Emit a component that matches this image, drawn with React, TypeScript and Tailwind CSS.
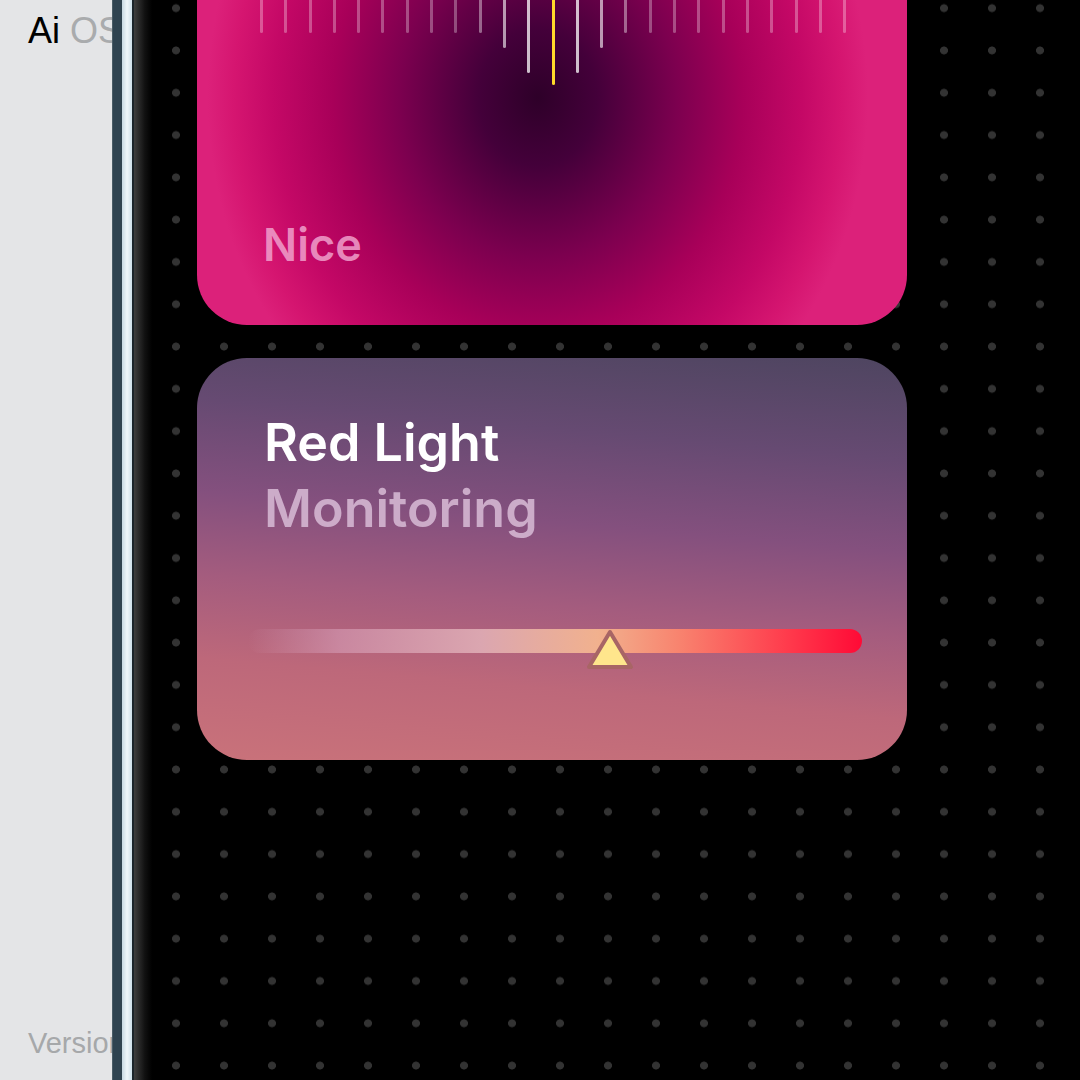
import React from 'react';

const ticks = Array.from({ length: 25 }, (_, i) => Math.abs(i - 12));

const tickClass = (d: number) => {
  if (d === 0) return 'h-[85px] bg-[#ffd92a]';
  if (d === 1) return 'h-[73px] bg-white/75';
  if (d === 2) return 'h-[48px] bg-white/60';
  if (d === 3) return 'h-[33px] bg-white/40';
  return 'h-[33px] bg-white/30';
};

const App = () => {
  return (
    <div className="flex h-[1080px] w-[1080px] overflow-hidden bg-black font-['Inter',sans-serif]">
      {/* side panel */}
      <div className="flex w-[112px] shrink-0 flex-col justify-between overflow-hidden whitespace-nowrap bg-[#e4e5e7] pl-[28px] pt-[13px] pb-[22px] font-['Liberation_Sans',Arial,sans-serif]">
        <div className="text-[36px] leading-[36px]">
          <span className="text-black">Ai</span> <span className="text-[#a9abad]">OS</span>
        </div>
        <div className="text-[29px] leading-[29px] text-[#a6a8aa]">Version 1.0</div>
      </div>
      <div className="w-[10px] shrink-0 border-l border-[#4a5c66] bg-[#2f4350]" />
      <div className="w-[10px] shrink-0 bg-[linear-gradient(to_right,#c6d8e2,#eef6fa,#cfe0ea)]" />
      <div className="w-[2px] shrink-0 bg-[#1b252b]" />
      <div className="w-[18px] shrink-0 bg-[linear-gradient(to_right,#3e3e3e,#111_60%,#000)]" />

      {/* canvas */}
      <div className="flex flex-1 flex-col gap-[33px] bg-[radial-gradient(circle,#333_3.6px,transparent_4.3px)] bg-[length:48px_42.3px] bg-[position:0px_-13px] pl-[45px] pr-[173px]">
        <div className="flex h-[325px] flex-col justify-between rounded-b-[50px] bg-[radial-gradient(ellipse_330px_380px_at_48%_30%,#2e0029_0%,#44003a_18%,#7c004f_42%,#a80059_62%,#c40866_80%,#d51570_92%,#dc217a_100%)] pb-[58px] pl-[63px]">
          <div className="flex items-start gap-[21.3px]">
            {ticks.map((d, i) => (
              <div key={i} className={`w-[3px] rounded-b-full ${tickClass(d)}`} />
            ))}
          </div>
          <div className="pl-[3px] text-[45px] font-semibold leading-none text-[#f0a0cc]/85">Nice</div>
        </div>

        <div className="flex h-[402px] flex-col rounded-[50px] bg-[linear-gradient(185deg,#4e4560_0%,#664a72_22%,#84507e_42%,#a45c7e_60%,#bd687a_78%,#c9727a_100%)] pl-[67px] pt-[52px]">
          <div className="text-[52px] font-semibold leading-[66px] text-white">Red Light</div>
          <div className="text-[52px] font-semibold leading-[66px] text-[#d4b6d2]/90">Monitoring</div>
          <div className="relative mt-[87px] mr-[45px] -ml-[16px] h-[24px] rounded-full bg-[linear-gradient(to_right,rgba(215,150,175,0)_0%,rgba(210,150,175,0.7)_15%,#dba6b0_38%,#f1b18e_57%,#f8846f_70%,#ff3a4c_88%,#ff0a36_100%)]">
            <svg
              className="absolute left-[59%] top-[-1px] -translate-x-1/2"
              width="52"
              height="44"
              viewBox="0 0 52 44"
            >
              <path
                d="M26 4 L47 39 L5 39 Z"
                fill="#ffe68c"
                stroke="#a86565"
                strokeWidth="4"
                strokeLinejoin="round"
              />
            </svg>
          </div>
        </div>
      </div>
    </div>
  );
};

export default App;
